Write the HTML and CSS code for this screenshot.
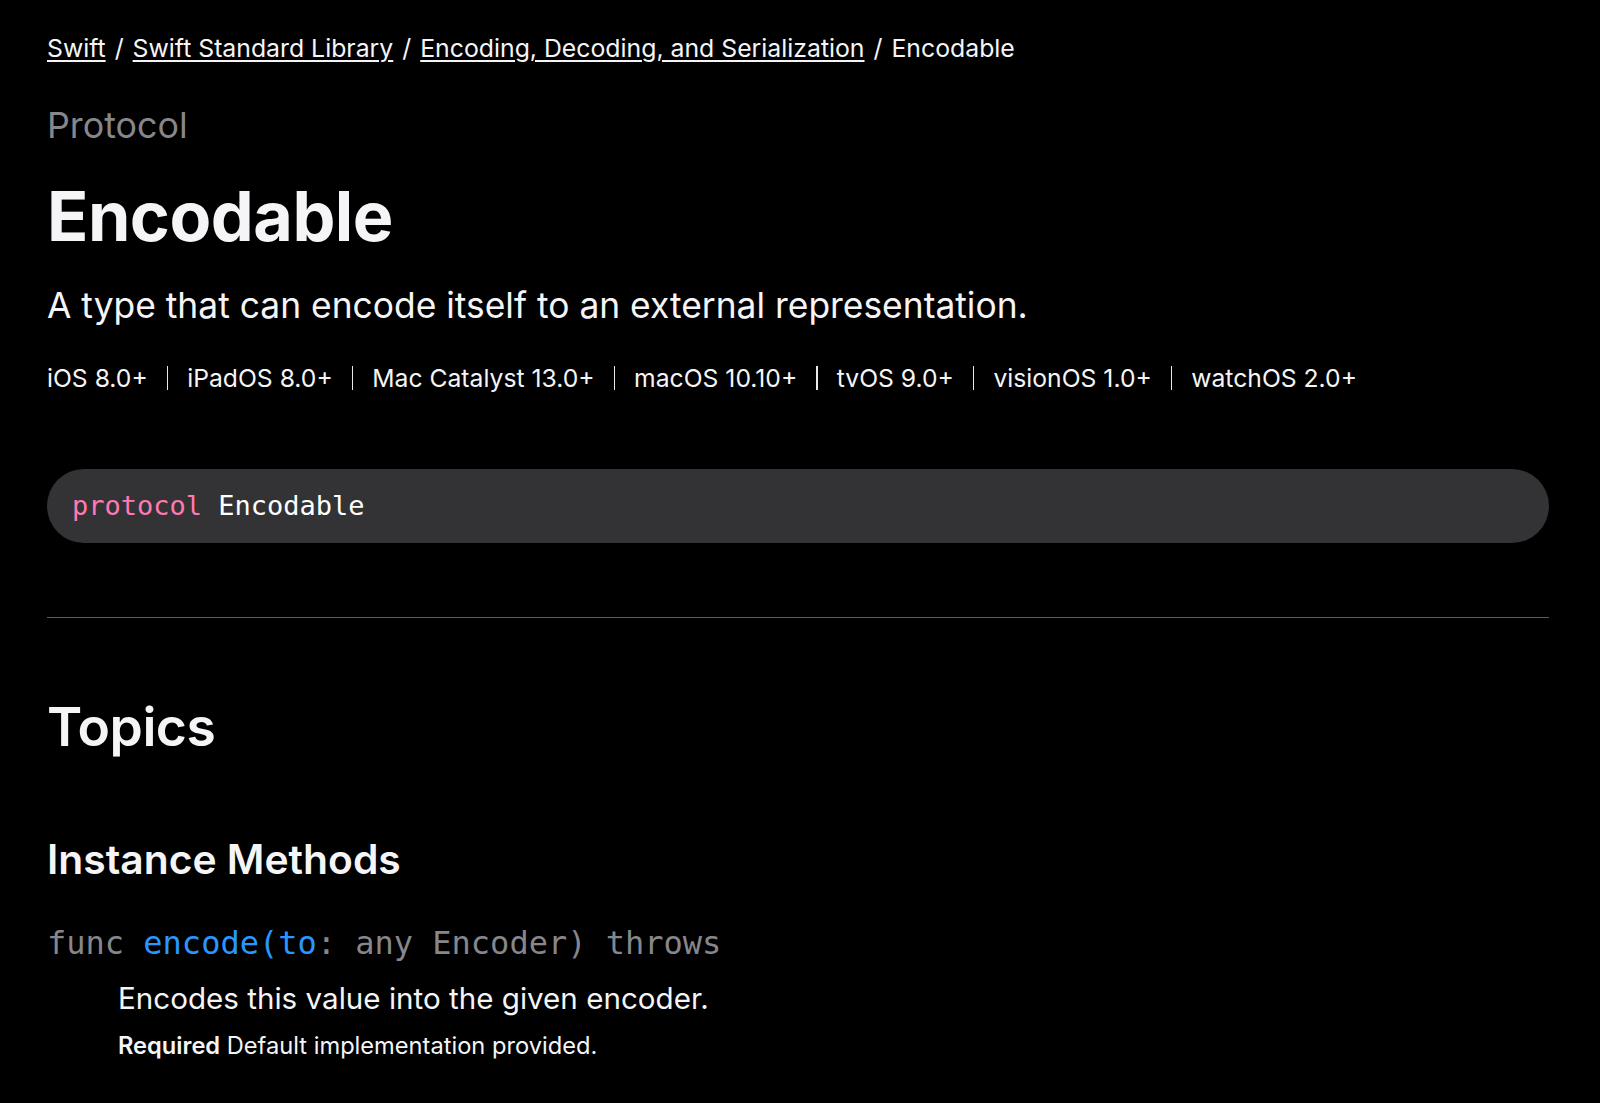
FILE: index.html
```html
<!DOCTYPE html>
<html lang="en">
<head>
<meta charset="utf-8">
<title>Encodable | Apple Developer Documentation</title>
<link rel="stylesheet" href="styles.css">
</head>
<body>
<main class="page">
  <nav class="breadcrumbs">
    <a href="#">Swift</a><span class="sep">/</span><a href="#">Swift Standard Library</a><span class="sep">/</span><a href="#">Encoding, Decoding, and Serialization</a><span class="sep">/</span><span class="current">Encodable</span>
  </nav>
  <div class="eyebrow">Protocol</div>
  <h1 class="title">Encodable</h1>
  <p class="abstract">A type that can encode itself to an external representation.</p>
  <ul class="platforms">
    <li>iOS 8.0+</li>
    <li>iPadOS 8.0+</li>
    <li>Mac Catalyst 13.0+</li>
    <li>macOS 10.10+</li>
    <li>tvOS 9.0+</li>
    <li>visionOS 1.0+</li>
    <li>watchOS 2.0+</li>
  </ul>
  <div class="declaration"><code><span class="kw">protocol</span> <span class="ident">Encodable</span></code></div>
  <hr class="divider">
  <h2 class="topics">Topics</h2>
  <h3 class="group">Instance Methods</h3>
  <div class="topic">
    <code class="sig"><span class="dim">func </span><a href="#" class="link">encode(to</a><span class="dim">: any Encoder) throws</span></code>
    <p class="desc">Encodes this value into the given encoder.</p>
    <p class="req"><strong>Required</strong> Default implementation provided.</p>
  </div>
</main>
</body>
</html>
```

FILE: styles.css
```css
html, body {
  margin: 0;
  padding: 0;
  background: #000;
}

body {
  color: #f5f5f7;
  font-family: Inter, "Noto Sans", "Liberation Sans", sans-serif;
  height: 1103px;
  overflow: hidden;
}

.page {
  padding: 33px 51px 0 47px;
}

.breadcrumbs {
  font-size: 24.8px;
  line-height: 30px;
  white-space: nowrap;
}

.breadcrumbs a {
  color: #f5f5f7;
  text-decoration: underline;
  text-decoration-thickness: 1.5px;
  text-underline-offset: 3px;
}

.breadcrumbs .sep {
  margin: 0 9px;
}

.eyebrow {
  margin-top: 42px;
  font-size: 35.8px;
  line-height: 40px;
  color: #86868b;
}

.title {
  margin: 31px 0 0;
  font-size: 68.2px;
  line-height: 80px;
  font-weight: 700;
  letter-spacing: -0.5px;
}

.abstract {
  margin: 30px 0 0;
  font-size: 35.4px;
  line-height: 40px;
}

.platforms {
  margin: 37px 0 0;
  padding: 0;
  list-style: none;
  display: flex;
  font-size: 24.7px;
  line-height: 30px;
}

.platforms li {
  display: flex;
  align-items: center;
}

.platforms li + li::before {
  content: "";
  width: 1.5px;
  height: 24px;
  background: #e8e8ed;
  margin: 0 19px;
}

.declaration {
  margin-top: 76px;
  height: 74px;
  background: #333336;
  border-radius: 37px;
  display: flex;
  align-items: center;
  padding-left: 25px;
}

.declaration code {
  font-family: "DejaVu Sans Mono", "Liberation Mono", monospace;
  font-size: 27px;
  line-height: 30px;
}

.kw {
  color: #ff7ab2;
}

.ident {
  color: #ffffff;
}

.divider {
  margin: 74px 0 0;
  border: 0;
  height: 1px;
  background: #5b5b5f;
}

.topics {
  margin: 74px 0 0;
  font-size: 53.4px;
  line-height: 70px;
  font-weight: 600;
  letter-spacing: -0.5px;
}

.group {
  margin: 72px 0 0;
  font-size: 40.8px;
  line-height: 50px;
  font-weight: 600;
}

.topic {
  margin-top: 39px;
}

.sig {
  display: block;
  font-family: "DejaVu Sans Mono", "Liberation Mono", monospace;
  font-size: 32px;
  line-height: 40px;
}

.dim {
  color: #86868b;
}

.link {
  color: #2997ff;
  text-decoration: none;
}

.desc {
  margin: 15px 0 0 71px;
  font-size: 29.6px;
  line-height: 40px;
}

.req {
  margin: 13px 0 0 71px;
  font-size: 23.65px;
  line-height: 30px;
}

.req strong {
  font-weight: 600;
}
```
